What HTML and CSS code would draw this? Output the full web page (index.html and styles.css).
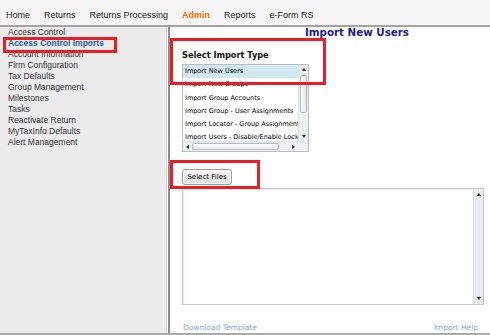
FILE: index.html
```html
<!DOCTYPE html>
<html>
<head>
  <title>Access Control Imports</title>
  <link rel="stylesheet" href="styles.css">
</head>
<body>
  <nav class="topnav">
    <a class="nav-item">Home</a>
    <a class="nav-item">Returns</a>
    <a class="nav-item">Returns Processing</a>
    <a class="nav-item active">Admin</a>
    <a class="nav-item">Reports</a>
    <a class="nav-item">e-Form RS</a>
  </nav>

  <div class="layout">
    <ul class="sidebar">
      <li>Access Control</li>
      <li class="current">Access Control Imports</li>
      <li>Account Information</li>
      <li>Firm Configuration</li>
      <li>Tax Defaults</li>
      <li>Group Management</li>
      <li>Milestones</li>
      <li>Tasks</li>
      <li>Reactivate Return</li>
      <li>MyTaxInfo Defaults</li>
      <li>Alert Management</li>
    </ul>

    <main class="content">
      <h2 class="page-title">Import New Users</h2>
      <h3 class="field-label">Select Import Type</h3>

      <div class="listbox">
        <ul class="list-items">
          <li class="selected">Import New Users</li>
          <li>Import New Groups</li>
          <li>Import Group Accounts</li>
          <li>Import Group - User Assignments</li>
          <li>Import Locator - Group Assignments</li>
          <li>Import Users - Disable/Enable Lockout</li>
        </ul>
        <div class="vscroll">
          <span class="arrow-cell"><span class="arrow up"></span></span>
          <span class="thumb-v"></span>
          <span class="arrow-cell push"><span class="arrow down"></span></span>
        </div>
        <div class="hscroll">
          <span class="arrow-cell"><span class="arrow left"></span></span>
          <span class="thumb-h"></span>
          <span class="arrow-cell push"><span class="arrow right"></span></span>
        </div>
        <div class="corner"></div>
      </div>

      <button class="select-files">Select Files</button>

      <div class="file-box">
        <div class="file-text"></div>
        <div class="vscroll track">
          <span class="arrow-cell"><span class="arrow up"></span></span>
          <span class="arrow-cell push"><span class="arrow down"></span></span>
        </div>
      </div>

      <div class="links">
        <a>Download Template</a>
        <a>Import Help</a>
      </div>
    </main>
  </div>

  <!-- annotation boxes -->
  <div class="callout callout-menu"></div>
  <div class="callout callout-type"></div>
  <div class="callout callout-files"></div>
</body>
</html>
```

FILE: styles.css
```css
body {
  margin: 0;
  position: relative;
  font-family: "Liberation Sans", Arial, sans-serif;
  color: #333;
  background: #fff;
}
.topnav {
  height: 20px;
  padding: 5px 0 0 6px;
  display: flex;
  align-items: center;
  gap: 14px;
  background: #f6f6f6;
  border-bottom: 2px solid #a3a3a3;
  font-size: 9px;
}
.nav-item {
  color: #222;
  text-decoration: none;
}
.nav-item.active {
  color: #ff6a00;
  font-weight: bold;
}
.layout {
  display: flex;
  height: 306px;
  border-bottom: 2px solid #ababab;
}
.sidebar {
  width: 158px;
  margin: 0 1px 0 0;
  padding: 0 0 0 8px;
  list-style: none;
  background: #ececec;
  border-right: 1px solid #d6d6d6;
  font-size: 8.5px;
  line-height: 11px;
  color: #333;
}
.sidebar .current {
  font-weight: bold;
  color: #1f6296;
}
.content {
  flex: 1;
  display: flex;
  flex-direction: column;
  padding: 0 6px 0 12px;
  border-left: 2px solid #8e8e8e;
  font-family: "DejaVu Sans", Verdana, sans-serif;
}
.page-title {
  margin: 0 0 0 123px;
  font-size: 10.3px;
  line-height: 11px;
  color: #1c2385;
}
.field-label {
  margin: 12px 0 4px;
  font-size: 8.2px;
  line-height: 10px;
  color: #111;
}
.listbox {
  width: 127px;
  height: 88px;
  box-sizing: border-box;
  border: 1px solid #bcbcbc;
  display: grid;
  grid-template-columns: 1fr 10px;
  grid-template-rows: 1fr 10px;
}
.list-items {
  margin: 0;
  padding: 0;
  list-style: none;
  overflow: hidden;
  font-size: 6.5px;
  color: #000;
}
.list-items li {
  height: 13.3px;
  line-height: 13.3px;
  padding-left: 2px;
  white-space: nowrap;
}
.list-items .selected {
  background: #d1e8f1;
}
.vscroll {
  display: flex;
  flex-direction: column;
  align-items: center;
  background: #eef1f3;
  border-left: 1px solid #dde2e6;
}
.hscroll {
  display: flex;
  align-items: center;
  background: #eef1f3;
  border-top: 1px solid #dde2e6;
}
.corner {
  background: #eef1f3;
}
.arrow-cell {
  width: 9px;
  height: 9px;
  flex: 0 0 9px;
  display: flex;
  align-items: center;
  justify-content: center;
}
.push {
  margin-top: auto;
  margin-left: auto;
}
.hscroll .push {
  margin-top: 0;
}
.vscroll .push {
  margin-left: 0;
}
.arrow {
  width: 0;
  height: 0;
}
.arrow.up {
  border-left: 2px solid transparent;
  border-right: 2px solid transparent;
  border-bottom: 3px solid #333;
}
.arrow.down {
  border-left: 2px solid transparent;
  border-right: 2px solid transparent;
  border-top: 3px solid #333;
}
.arrow.left {
  border-top: 2px solid transparent;
  border-bottom: 2px solid transparent;
  border-right: 3px solid #333;
}
.arrow.right {
  border-top: 2px solid transparent;
  border-bottom: 2px solid transparent;
  border-left: 3px solid #333;
}
.thumb-v {
  width: 7px;
  height: 38px;
  margin-top: 1px;
  box-sizing: border-box;
  border: 1px solid #b3bbc3;
  border-radius: 2px;
  background: linear-gradient(to right, #fdfdfd, #e3e7ea);
}
.thumb-h {
  width: 87px;
  height: 7px;
  box-sizing: border-box;
  border: 1px solid #b3bbc3;
  border-radius: 2px;
  background: linear-gradient(#fdfdfd, #e3e7ea);
}
.select-files {
  align-self: flex-start;
  width: 50px;
  height: 16px;
  margin-top: 17px;
  padding: 0;
  font-family: "DejaVu Sans", Verdana, sans-serif;
  font-size: 7px;
  color: #000;
  border: 1px solid #9c9c9c;
  border-radius: 3px;
  background: linear-gradient(#fafafa, #dcdcdc);
  box-shadow: inset 0 0 0 1px #fff;
}
.file-box {
  height: 117px;
  margin-top: 3px;
  box-sizing: border-box;
  border: 1px solid #c4c8cc;
  display: grid;
  grid-template-columns: 1fr 10px;
  box-shadow: inset 1px 1px 1px rgba(0, 0, 0, 0.08);
}
.vscroll.track {
  background: #e7ecf0;
  padding: 1px 0;
}
.links {
  margin-top: 18px;
  display: flex;
  justify-content: space-between;
  padding: 0 6px 0 1px;
  font-size: 7.5px;
  line-height: 10px;
  color: #75a9dd;
}
.callout {
  position: absolute;
  box-sizing: border-box;
  border: 3px solid #ec1c24;
}
.callout-menu {
  left: 3px;
  top: 37px;
  width: 114px;
  height: 16px;
}
.callout-type {
  left: 170px;
  top: 38px;
  width: 156px;
  height: 47px;
}
.callout-files {
  left: 170px;
  top: 160px;
  width: 90px;
  height: 29px;
}
```
